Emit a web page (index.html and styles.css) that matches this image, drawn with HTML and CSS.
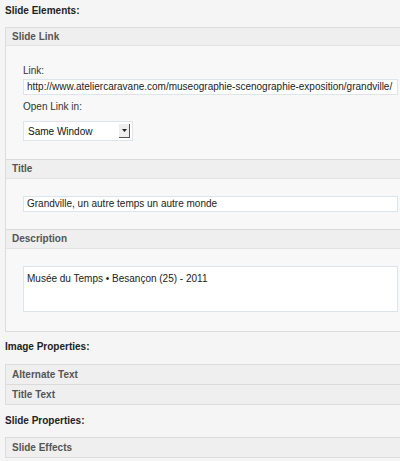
FILE: index.html
```html
<!DOCTYPE html>
<html>
<head>
<meta charset="utf-8">
<link rel="stylesheet" href="styles.css">
</head>
<body>
<div class="page">
  <div class="group-title">Slide Elements:</div>
  <div class="box">
    <div class="box-head">Slide Link</div>
    <div class="box-body link-body">
      <label class="lbl">Link:</label>
      <div class="field">http://www.ateliercaravane.com/museographie-scenographie-exposition/grandville/</div>
      <label class="lbl lbl2">Open Link in:</label>
      <div class="select"><span>Same Window</span><span class="arrow"><svg width="7" height="5" viewBox="0 0 7 5"><path d="M1 1h5L3.5 4z" fill="#222"/></svg></span></div>
    </div>
    <div class="box-head mid">Title</div>
    <div class="box-body title-body">
      <div class="field">Grandville, un autre temps un autre monde</div>
    </div>
    <div class="box-head mid">Description</div>
    <div class="box-body desc-body">
      <div class="field area">Musée du Temps • Besançon (25) - 2011</div>
    </div>
  </div>
  <div class="group-title g2">Image Properties:</div>
  <div class="box">
    <div class="box-head closed">Alternate Text</div>
    <div class="box-head closed mid">Title Text</div>
  </div>
  <div class="group-title g3">Slide Properties:</div>
  <div class="box">
    <div class="box-head closed">Slide Effects</div>
  </div>
</div>
</body>
</html>
```
FILE: styles.css
```css
html, body {
  margin: 0;
  padding: 0;
  background: #f5f5f5;
}
body {
  font-family: "Liberation Sans", Arial, sans-serif;
  font-size: 10px;
  color: #333;
  overflow: hidden;
  width: 400px;
  height: 461px;
}
.page {
  padding: 3px 0 0 5px;
}
.group-title {
  font-weight: bold;
  color: #222;
  height: 17px;
  line-height: 15px;
  margin-bottom: 7px;
}
.g2 { margin-top: 7px; margin-bottom: 8px; }
.g3 { margin-top: 8px; margin-bottom: 7px; }
.box {
  width: 410px;
  border: 1px solid #dcdcdc;
  border-right: none;
  background: #f8f8f8;
}
.box-head {
  height: 17px;
  line-height: 17px;
  padding-left: 6px;
  background: #efefef;
  border-bottom: 1px solid #e2e2e2;
  font-weight: bold;
  color: #555;
}
.box-head.mid {
  height: 18px;
  line-height: 18px;
  border-top: 1px solid #dadada;
}
.box-head.closed {
  height: 19px;
  line-height: 19px;
  border-bottom: none;
}
.box-body {
  padding: 0 0 0 17px;
}
.link-body {
  padding-top: 17px;
  height: 96px;
}
.lbl {
  display: block;
  height: 16px;
  line-height: 16px;
  color: #333;
}
.lbl2 {
  margin-top: 4px;
}
.field {
  width: 370px;
  height: 14px;
  line-height: 14px;
  border: 1px solid #dce6ea;
  background: #fff;
  padding-left: 3px;
  white-space: nowrap;
  color: #222;
}
.select {
  margin-top: 6px;
  width: 104px;
  height: 18px;
  border: 1px solid #dce6ea;
  background: #fff;
  display: flex;
  align-items: center;
  justify-content: space-between;
  padding-left: 4px;
  color: #111;
}
.arrow {
  width: 10px;
  height: 13px;
  margin-right: 2px;
  border-right: 1px solid #555;
  border-bottom: 1px solid #555;
  background: #eee;
  display: flex;
  align-items: center;
  justify-content: center;
}
.title-body {
  padding-top: 17px;
  height: 33px;
}
.desc-body {
  padding-top: 17px;
  height: 65px;
}
.field.area {
  height: 39px;
  padding-top: 5px;
  line-height: 14px;
}
```
